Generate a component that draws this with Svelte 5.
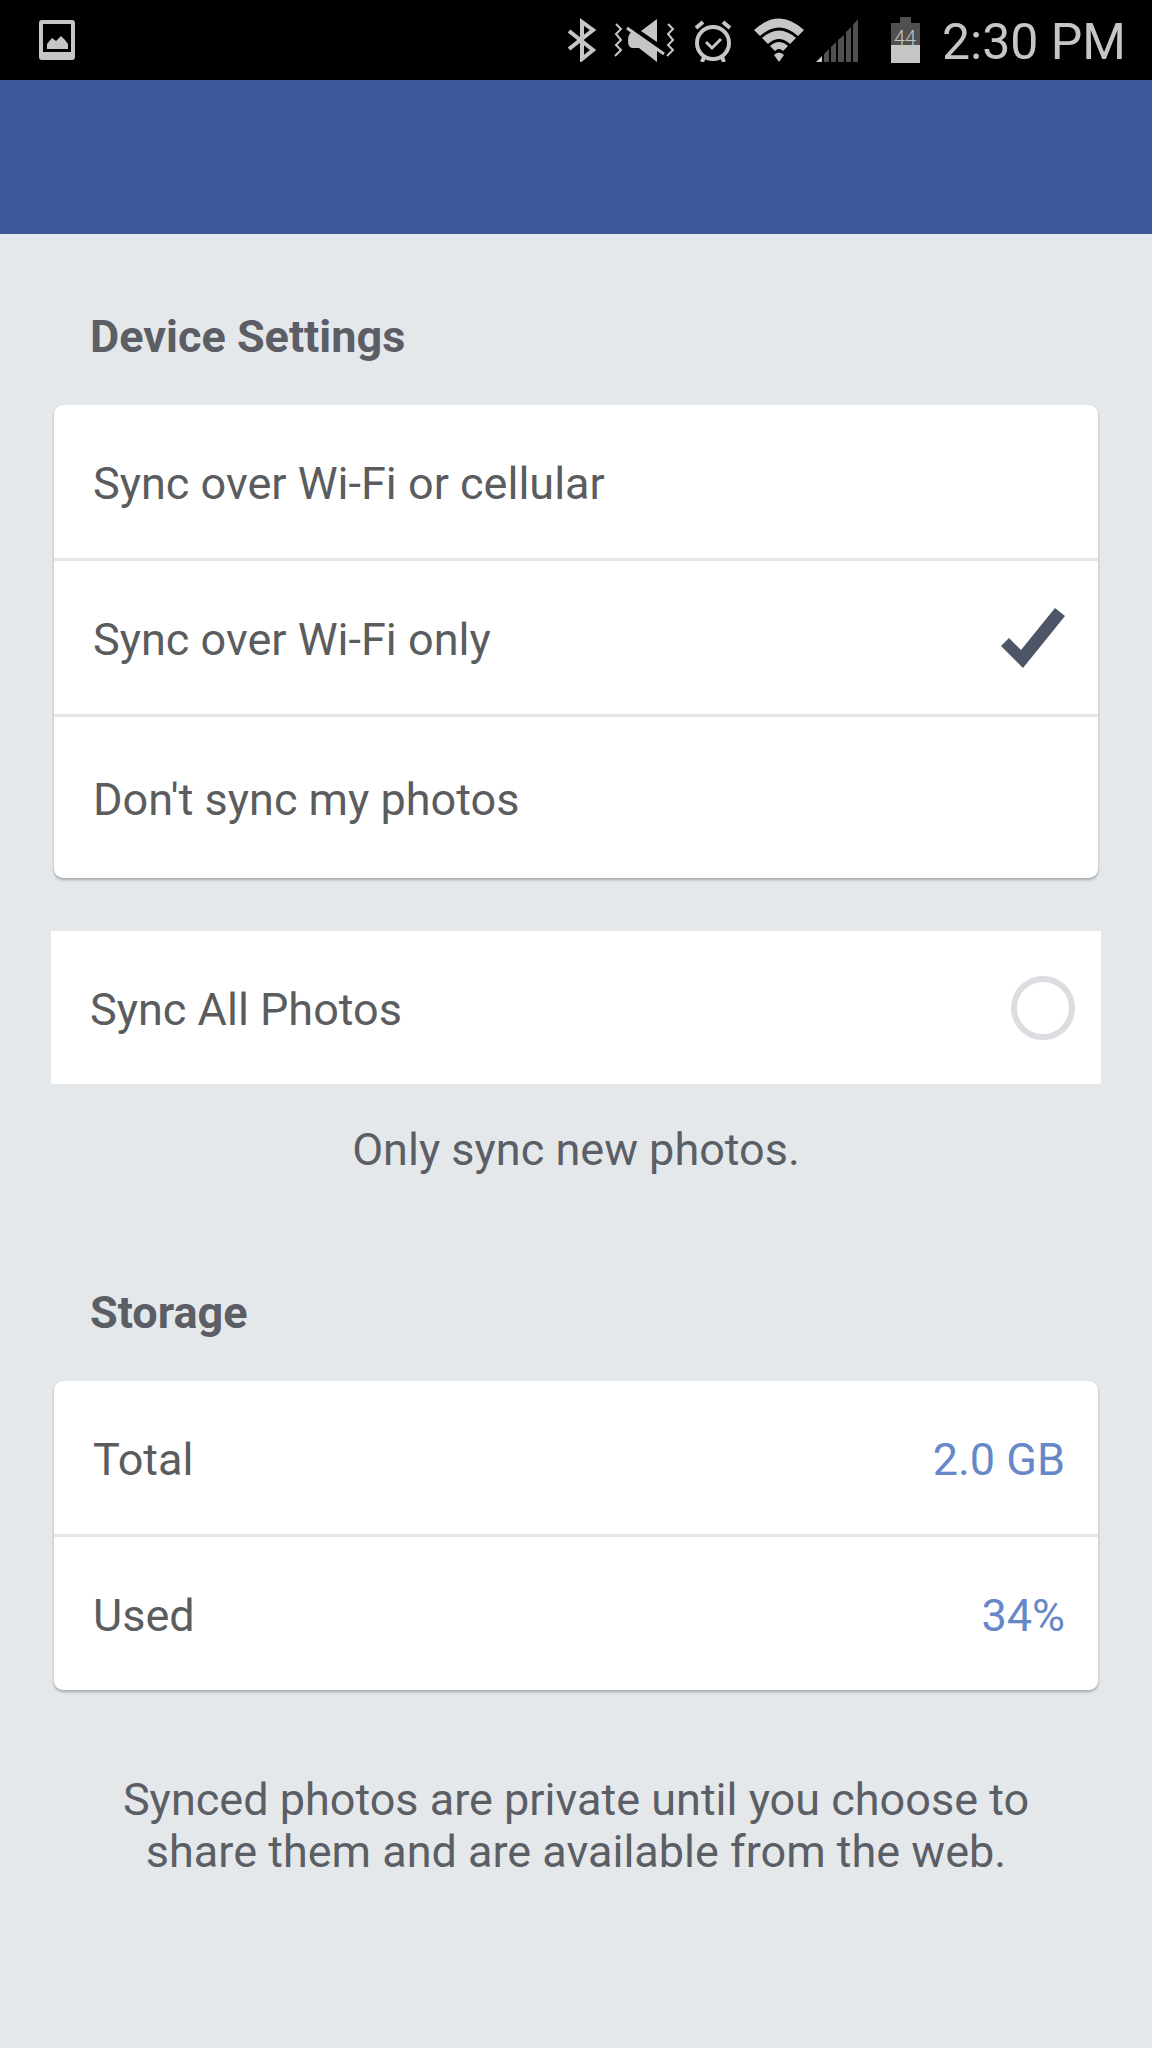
<script>
  const options = [
    { value: 'any', label: 'Sync over Wi-Fi or cellular' },
    { value: 'wifi', label: 'Sync over Wi-Fi only' },
    { value: 'off', label: "Don't sync my photos" },
  ];

  const storage = [
    { label: 'Total', value: '2.0 GB' },
    { label: 'Used', value: '34%' },
  ];

  let syncMode = $state('wifi');
  let syncAll = $state(false);
</script>

<div class="screen">
  <div class="status-bar">
    <svg class="picture" width="38" height="42" viewBox="0 0 38 42" aria-hidden="true">
      <path fill-rule="evenodd" d="M4 1h30q3 0 3 3v34q0 3-3 3H4q-3 0-3-3V4q0-3 3-3zM5 5v28h28V5z" />
      <path d="M9 30v-5l5-6 4 3 5-5 4 4 3 4v5z" />
    </svg>

    <div class="status-icons">
      <svg width="30" height="44" viewBox="0 0 30 44" aria-hidden="true">
        <path class="line" d="M1 13l24 19-11 9V4l11 8L1 31" stroke-width="4" />
      </svg>
      <svg class="mute" width="62" height="44" viewBox="0 0 62 44" aria-hidden="true">
        <path class="line" d="M2 6l5 5-5 5 5 6-5 5 5 5-6 6M54 6l5 5-5 5 5 6-5 5 5 5-6 6" stroke-width="2" />
        <path d="M43 1v23L27 13zM17 14l26 18v12L25 30h-7q-4-1-4-7t3-9z" />
        <path class="line" d="M13 10l37 26" stroke-width="3" />
      </svg>
      <svg class="alarm" width="38" height="44" viewBox="0 0 38 44" aria-hidden="true">
        <circle class="line" cx="19" cy="25" r="16" stroke-width="4" />
        <path class="line" d="M12 24l6 6 9-9" stroke-width="3" />
        <path class="line" d="M2 10l7-6M29 4l7 6M10 39l-2 5M28 39l2 5" stroke-width="4" />
      </svg>
      <svg class="wifi" width="50" height="44" viewBox="0 0 50 44" aria-hidden="true">
        <path d="M0 12Q25-11 50 12l-6 6Q25 1 6 18z" />
        <path d="M8 20q17-15 34 0l-6 6q-11-10-22 0z" />
        <path d="M16 28q9-8 18 0l-5 5q-4-4-8 0z" />
        <path d="M20 37q5-5 10 0l-5 7z" />
      </svg>
      <svg class="signal" width="43" height="44" viewBox="0 0 43 44" aria-hidden="true">
        <path d="M0 44l6-6v6z" />
        <path class="dim" d="M8 36l5-5v13H8zM15 29l5-5v20h-5zM22 22l6-5v27h-6zM30 14l5-5v35h-5zM37 7l5-6v43h-5z" />
      </svg>
      <svg class="battery" width="29" height="46" viewBox="0 0 29 46" aria-hidden="true">
        <path class="dim" d="M9 0h11v6h9v22H0V6h9z" />
        <path d="M0 28h29v18H0z" />
        <text x="14" y="28" text-anchor="middle">44</text>
      </svg>
      <time>2:30 PM</time>
    </div>
  </div>

  <header></header>

  <main>
    <h2 id="device-title">Device Settings</h2>
    <div class="card choices" role="radiogroup" aria-labelledby="device-title">
      {#each options as option (option.value)}
        <label class="row">
          <input type="radio" name="sync-mode" value={option.value} bind:group={syncMode} />
          <span>{option.label}</span>
          {#if syncMode === option.value}
            <svg width="64" height="60" viewBox="0 0 64 60" aria-hidden="true">
              <path d="M54 0l10 8-42 52L0 38l8-8 12 12z" />
            </svg>
          {/if}
        </label>
      {/each}
    </div>

    <label class="sync-all">
      <span>Sync All Photos</span>
      <input type="checkbox" bind:checked={syncAll} />
    </label>
    <p class="hint">Only sync new photos.</p>

    <h2>Storage</h2>
    <dl class="card storage">
      {#each storage as item (item.label)}
        <div class="row">
          <dt>{item.label}</dt>
          <dd>{item.value}</dd>
        </div>
      {/each}
    </dl>
    <p class="note">Synced photos are private until you choose to share them and are available from the web.</p>
  </main>
</div>

<style>
  :global(body) {
    background: #e4e8eb;
  }

  .screen {
    min-height: 100vh;
    background: #e4e8eb;
    color: #5b5c5e;
    font-family: Roboto, 'Liberation Sans', sans-serif;
    font-size: 45px;
    line-height: 52px;
  }

  .status-bar {
    display: flex;
    align-items: center;
    justify-content: space-between;
    height: 80px;
    padding: 0 26px 0 38px;
    background: #000;
    color: #c6c6c6;
  }

  .status-bar svg {
    flex: none;
    fill: #c6c6c6;
  }

  .status-bar .line {
    fill: none;
    stroke: #c6c6c6;
  }

  .status-bar .dim {
    fill: #505050;
  }

  .status-icons {
    display: flex;
    align-items: center;
  }

  .mute {
    margin-left: 16px;
  }

  .alarm {
    margin-left: 18px;
  }

  .wifi {
    margin-left: 22px;
  }

  .signal {
    margin-left: 12px;
  }

  .battery {
    margin-left: 32px;
  }

  .battery text {
    font-size: 20px;
    font-weight: 300;
  }

  time {
    margin-left: 22px;
    padding-top: 4px;
    font-size: 50px;
  }

  header {
    height: 154px;
    background: #3c5999;
  }

  main {
    padding: 77px 51px;
  }

  h2 {
    margin: 0 39px 42px;
    font-size: 45px;
    font-weight: 700;
    color: #5b5e65;
  }

  .card {
    margin: 0 3px;
    background: #fff;
    border-radius: 9px;
    box-shadow: 0 2px 3px rgba(0, 0, 0, 0.28);
  }

  .row {
    position: relative;
    display: flex;
    align-items: center;
    justify-content: space-between;
    box-sizing: border-box;
    min-height: 156px;
    padding: 0 33px 0 39px;
    border-bottom: 3px solid #e5e6e8;
  }

  .row:last-child {
    min-height: 153px;
    border-bottom: none;
  }

  .choices .row:last-child {
    min-height: 161px;
  }

  .row input {
    position: absolute;
    inset: 0;
    width: 100%;
    height: 100%;
    margin: 0;
    opacity: 0;
  }

  .row svg {
    fill: #4d5566;
  }

  label span,
  dt,
  dd {
    padding-top: 4px;
  }

  .sync-all {
    display: flex;
    align-items: center;
    justify-content: space-between;
    min-height: 153px;
    margin-top: 53px;
    padding: 0 26px 0 39px;
    background: #fff;
  }

  .sync-all input {
    appearance: none;
    box-sizing: border-box;
    width: 64px;
    height: 64px;
    margin: 0;
    border: 6px solid #dcdde0;
    border-radius: 50%;
  }

  .sync-all input:checked {
    background: #4d5566;
  }

  p {
    margin: 0;
    text-align: center;
    color: #5b5e65;
  }

  .hint {
    margin: 40px 0 111px;
  }

  .note {
    margin: 84px 60px 0;
  }

  dd {
    margin: 0;
    color: #6688c8;
  }
</style>
